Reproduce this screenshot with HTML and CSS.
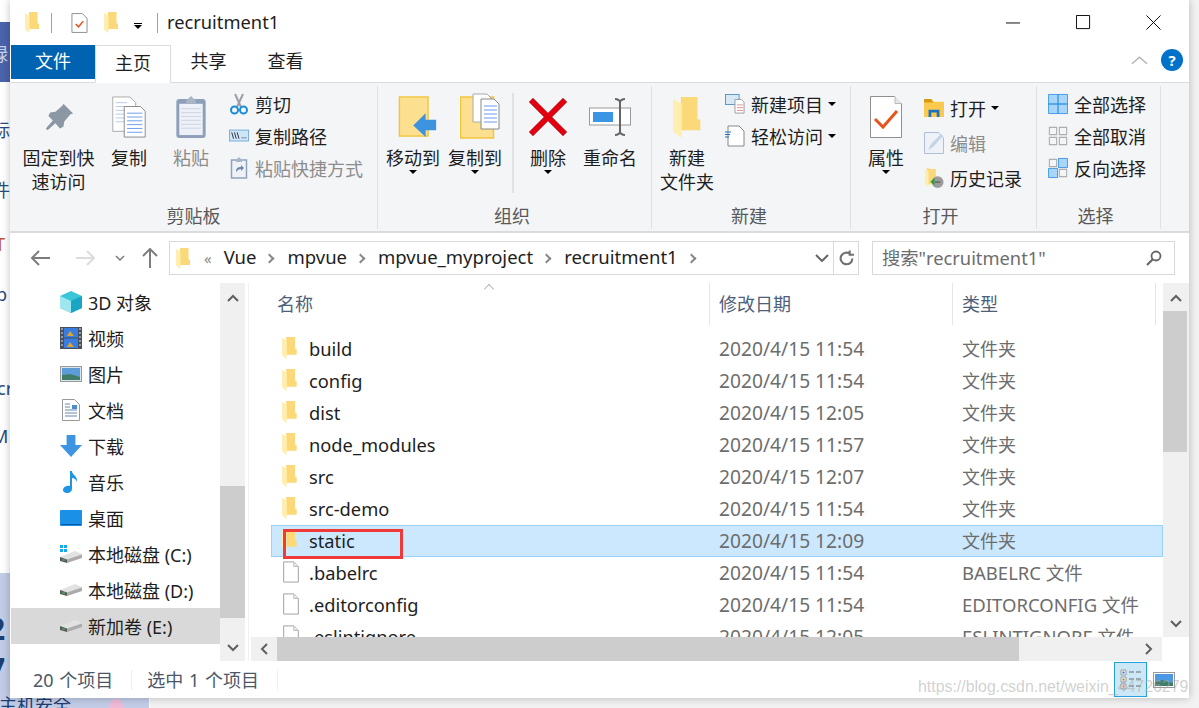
FILE: index.html
```html
<!DOCTYPE html>
<html lang="zh-CN">
<head>
    <meta charset="UTF-8">
    <title>recruitment1</title>
    <link rel="stylesheet" href="styles.css">
</head>
<body>
    <svg class="defs" width="0" height="0">
        <symbol id="folder" viewBox="0 0 14 21" preserveAspectRatio="xMinYMid">
            <path d="M4 0h8.500v11.500H14V17H4z" fill="#fbd878"/>
            <path d="M0 1l4.500 2.500V21L0 17.500z" fill="#ffeeb0"/>
        </symbol>
        <symbol id="file" viewBox="0 0 18 24">
            <path d="M1 1h11l5 5v17H1z" fill="#fff" stroke="#9a9a9a"/>
            <path d="M12 1v5h5" fill="#e8e8e8" stroke="#bcbcbc"/>
        </symbol>
        <symbol id="drive" viewBox="0 0 22 12">
            <path d="M0 6l15-6 7 3v3L7 11 0 8z" fill="#e2e2e2"/>
            <path d="M0 6l7 2.500V12L0 10z" fill="#5a5a5a"/>
            <path d="M7 8.500L22 3.500V7L7 12z" fill="#ababab"/>
            <path d="M2 8.500h3v1H2z" fill="#55c060"/>
        </symbol>
    </svg>

    <div class="wallpaper">
        <div class="wp-band"><span>禄</span></div>
        <div class="wp-text wp-t1">标</div>
        <div class="wp-text wp-t2">件</div>
        <div class="wp-text wp-t3">T</div>
        <div class="wp-text wp-t4">p</div>
        <div class="wp-text wp-t5">cr</div>
        <div class="wp-text wp-t6">M</div>
        <div class="wp-photo">
            <span class="wp-big wp-b1">2</span>
            <span class="wp-big wp-b2">7</span>
            <span class="wp-caption">主机安全</span>
            <i class="wp-flower"></i>
        </div>
    </div>

    <div class="window">
        <div class="titlebar">
            <svg class="ico folder-sm"><use href="#folder"/></svg>
            <span class="tb-sep"></span>
            <svg class="qa-check" viewBox="0 0 18 22"><path d="M1 1h11l5 5v15H1z" fill="#fff" stroke="#8c8c8c"/><path d="M5 12l3 3 5-6" fill="none" stroke="#e8531d" stroke-width="1.6"/></svg>
            <svg class="ico folder-sm qa-folder"><use href="#folder"/></svg>
            <span class="qa-drop"></span>
            <span class="tb-sep tb-sep2"></span>
            <span class="title">recruitment1</span>
            <div class="win-btns">
                <svg viewBox="0 0 16 16" class="win-btn"><path d="M0 8.500h15" stroke="#000" fill="none"/></svg>
                <svg viewBox="0 0 16 16" class="win-btn"><path d="M.5.500h14v14H.5z" stroke="#000" fill="none"/></svg>
                <svg viewBox="0 0 16 16" class="win-btn"><path d="M.5.500l15 15M15.500.500l-15 15" stroke="#000" fill="none"/></svg>
            </div>
        </div>

        <div class="tabs">
            <div class="tab tab-file">文件</div>
            <div class="tab tab-active">主页</div>
            <div class="tab">共享</div>
            <div class="tab">查看</div>
            <div class="tabs-right">
                <svg class="collapse" viewBox="0 0 18 10"><path d="M1 9l8-7 8 7" fill="none" stroke="#b4b4b4" stroke-width="1.6"/></svg>
                <span class="help">?</span>
            </div>
        </div>

        <div class="ribbon">
            <section class="group g-clip">
                <div class="group-body">
                    <div class="big big-pin">
                        <svg class="big-ico" viewBox="0 0 34 34"><path d="M22 2l11 11-3 1-7 8-1 6-4 2-5-6-9 8-2-2 8-9-5-5 2-4 6-1 8-7z" fill="#8b98a4"/></svg>
                        <span class="big-label">固定到快<br>速访问</span>
                    </div>
                    <div class="big big-copy">
                        <svg class="big-ico" viewBox="0 0 36 44"><path d="M1 1h18l6 6v30H1z" fill="#fff" stroke="#aaa"/><path d="M4 7h12M4 11h16M4 15h16M4 19h16M4 23h16M4 27h16" stroke="#b5c6e8"/><path d="M13 11h17l5 5v27H13z" fill="#fff" stroke="#888"/><path d="M16 18h16M16 22h16M16 26h16M16 30h16M16 34h16M16 38h16" stroke="#6a9bea"/></svg>
                        <span class="big-label">复制</span>
                    </div>
                    <div class="big big-paste dim">
                        <svg class="big-ico" viewBox="0 0 30 44"><rect x="0" y="4" width="30" height="40" rx="3" fill="#8e9fbc"/><rect x="3" y="9" width="24" height="32" fill="#edf0f6"/><path d="M5 14h20M5 18h20M5 22h20M5 26h20M5 30h20M5 34h20" stroke="#ccd5e4"/><path d="M10 6l5-5 5 5v3H10z" fill="#a9b4c4"/></svg>
                        <span class="big-label">粘贴</span>
                    </div>
                    <div class="small-col col-clip">
                        <div class="small">
                            <svg class="small-ico" viewBox="0 0 18 22"><path d="M5 1l6 13M13 1L7 14" stroke="#9aa0a6" stroke-width="2"/><circle cx="4.500" cy="17" r="3.500" fill="none" stroke="#1b8fd6" stroke-width="2"/><circle cx="13.500" cy="17" r="3.500" fill="none" stroke="#1b8fd6" stroke-width="2"/></svg>
                            <span>剪切</span>
                        </div>
                        <div class="small">
                            <svg class="small-ico" viewBox="0 0 22 14"><rect x=".5" y=".5" width="21" height="12" fill="#cfe6f8" stroke="#6ea9dc"/><path d="M3 3l2 7M6 3l2 7M9 3l2 7" stroke="#223" fill="none"/><path d="M14 9h1M16 9h1M18 9h1" stroke="#223"/></svg>
                            <span>复制路径</span>
                        </div>
                        <div class="small dim">
                            <svg class="small-ico" viewBox="0 0 16 22"><rect x=".5" y="3" width="15" height="18" fill="#eef2f7" stroke="#8ea3c0" stroke-width="1.500"/><path d="M5 3l3-3 3 3v2H5z" fill="#a9b4c4"/><path d="M5 15c0-4 2-5 5-5V8l3 3-3 3v-2c-2 0-3 1-5 3z" fill="#6f86a8"/></svg>
                            <span>粘贴快捷方式</span>
                        </div>
                    </div>
                </div>
                <div class="group-name">剪贴板</div>
            </section>

            <section class="group g-org">
                <div class="group-body">
                    <div class="big big-move">
                        <svg class="big-ico" viewBox="0 0 40 44"><rect x=".5" y="1" width="30" height="41" fill="#fde08f" stroke="#f0c63f" stroke-width="1.500"/><path d="M15 31L28 18v7h11v11H28v7z" fill="#3d94de"/></svg>
                        <span class="big-label">移动到</span><span class="drop"></span>
                    </div>
                    <div class="big big-copyto">
                        <svg class="big-ico" viewBox="0 0 40 46"><rect x=".5" y="4" width="33" height="41" fill="#fde08f" stroke="#f0c63f" stroke-width="1.500"/><path d="M13 1h14l4 4v24H13z" fill="#fff" stroke="#aaa"/><path d="M21 6h13l5 5v25H21z" fill="#fff" stroke="#888"/><path d="M24 13h13M24 17h13M24 21h13M24 25h13M24 29h13" stroke="#6a9bea"/></svg>
                        <span class="big-label">复制到</span><span class="drop"></span>
                    </div>
                    <div class="v-sep"></div>
                    <div class="big big-del">
                        <svg class="big-ico" viewBox="0 0 38 38"><path d="M4 0l15 15L34 0l4 4-15 15 15 15-4 4-15-15L4 38l-4-4 15-15L0 4z" fill="#e0000f" stroke="#a4424a" stroke-width=".5"/></svg>
                        <span class="big-label">删除</span><span class="drop"></span>
                    </div>
                    <div class="big big-ren">
                        <svg class="big-ico" viewBox="0 0 42 38"><rect x=".5" y="10" width="41" height="17" fill="#fff" stroke="#999"/><rect x="4" y="14" width="20" height="10" fill="#3a96e4"/><path d="M26 1c3 0 5 2 5 3v30c0 1 2 3 5 3M36 1c-3 0-5 2-5 3M26 37c3 0 5-2 5-3" fill="none" stroke="#666" stroke-width="2"/></svg>
                        <span class="big-label">重命名</span>
                    </div>
                </div>
                <div class="group-name">组织</div>
            </section>

            <section class="group g-new">
                <div class="group-body">
                    <div class="big big-newf">
                        <svg class="big-ico" viewBox="0 0 28 41"><use href="#folder"/></svg>
                        <span class="big-label">新建<br>文件夹</span>
                    </div>
                    <div class="small-col col-new">
                        <div class="small">
                            <svg class="small-ico" viewBox="0 0 22 22"><rect x=".5" y=".5" width="15" height="11" fill="#d7e8f6" stroke="#4d8fc0"/><path d="M11 6h7l3 3v12H11z" fill="#fff" stroke="#999"/><path d="M13 12h7M13 15h7M13 18h7" stroke="#d98a8a"/></svg>
                            <span>新建项目</span><span class="drop-in"></span>
                        </div>
                        <div class="small">
                            <svg class="small-ico" viewBox="0 0 20 22"><path d="M3 1h11l5 5v15H3z" fill="#fff" stroke="#888"/><path d="M0 7h6M0 9.500h5M0 12h4" stroke="#1b70c0"/></svg>
                            <span>轻松访问</span><span class="drop-in"></span>
                        </div>
                    </div>
                </div>
                <div class="group-name">新建</div>
            </section>

            <section class="group g-open">
                <div class="group-body">
                    <div class="big big-prop">
                        <svg class="big-ico" viewBox="0 0 32 42"><path d="M.5.500h24l7 7v34H.5z" fill="#fff" stroke="#8f8f8f"/><path d="M25 .5v7h7" fill="#e6e6e6" stroke="#bbb"/><path d="M5 23l8 8L27 15" fill="none" stroke="#e8531d" stroke-width="3"/></svg>
                        <span class="big-label">属性</span><span class="drop"></span>
                    </div>
                    <div class="small-col col-open">
                        <div class="small">
                            <svg class="small-ico" viewBox="0 0 22 20"><path d="M0 0h8l3 3h11v17H0z" fill="#fcc94f"/><path d="M0 0h8l2 4H0z" fill="#d79b11"/><path d="M5 20v-8h12v8h-3v-5H8v5z" fill="#1c73c5"/></svg>
                            <span>打开</span><span class="drop-in"></span>
                        </div>
                        <div class="small dim">
                            <svg class="small-ico" viewBox="0 0 20 22"><path d="M.5.500h14l5 5v16H.5z" fill="#eef2f8" stroke="#aebfd8"/><path d="M4 18l3-6 10-10 2 2L9 15z" fill="#c5d2e4"/></svg>
                            <span>编辑</span>
                        </div>
                        <div class="small">
                            <svg class="small-ico" viewBox="0 0 22 22"><path d="M3 0l5 1h5v17H3z" fill="#fbd878"/><path d="M1 1l4 2.500V21l-4-3z" fill="#ffeeb0"/><circle cx="15" cy="15.500" r="6.500" fill="#9c9c9c"/><path d="M7 15l4.500-4v8z" fill="#26a13a"/><path d="M12 15.500h6" stroke="#444"/></svg>
                            <span>历史记录</span>
                        </div>
                    </div>
                </div>
                <div class="group-name">打开</div>
            </section>

            <section class="group g-sel">
                <div class="group-body">
                    <div class="small-col col-sel">
                        <div class="small">
                            <svg class="small-ico" viewBox="0 0 22 22"><path d="M.500.500h21v21H.5z" fill="#a8d6fb" stroke="#3a96e4"/><path d="M11 0v22M0 11h22" stroke="#3a96e4" stroke-width="1.500"/></svg>
                            <span>全部选择</span>
                        </div>
                        <div class="small">
                            <svg class="small-ico" viewBox="0 0 22 22"><path d="M1.500 1.500h8v8h-8zM12.500 1.500h8v8h-8zM1.500 12.500h8v8h-8zM12.500 12.500h8v8h-8z" fill="none" stroke="#aeaeae" stroke-width="1.200"/></svg>
                            <span>全部取消</span>
                        </div>
                        <div class="small">
                            <svg class="small-ico" viewBox="0 0 22 22"><path d="M.5 11.500h10v10H.5zM11.500.500h10v10h-10z" fill="#a8d6fb" stroke="#3a96e4"/><path d="M1.500 1.500h8v8h-8zM12.500 12.500h8v8h-8z" fill="none" stroke="#aeaeae" stroke-width="1.200"/></svg>
                            <span>反向选择</span>
                        </div>
                    </div>
                </div>
                <div class="group-name">选择</div>
            </section>
        </div>

        <div class="navbar">
            <svg class="nav-arrow" viewBox="0 0 20 16"><path d="M9 1L2 8l7 7M2 8h18" fill="none" stroke="#7d7d7d" stroke-width="2"/></svg>
            <svg class="nav-arrow nav-fwd" viewBox="0 0 20 16"><path d="M11 1l7 7-7 7M18 8H0" fill="none" stroke="#dcdcdc" stroke-width="2"/></svg>
            <svg class="nav-down" viewBox="0 0 10 6"><path d="M1 1l4 4 4-4" fill="none" stroke="#7d7d7d" stroke-width="1.500"/></svg>
            <svg class="nav-up" viewBox="0 0 16 20"><path d="M1 8l7-7 7 7M8 1v19" fill="none" stroke="#7d7d7d" stroke-width="2"/></svg>
            <div class="address">
                <svg class="ico folder-sm addr-folder"><use href="#folder"/></svg>
                <span class="crumb-more">«</span>
                <span class="crumb">Vue</span><span class="chev"></span>
                <span class="crumb">mpvue</span><span class="chev"></span>
                <span class="crumb">mpvue_myproject</span><span class="chev"></span>
                <span class="crumb">recruitment1</span><span class="chev"></span>
                <svg class="addr-down" viewBox="0 0 14 8"><path d="M1 1l6 6 6-6" fill="none" stroke="#666" stroke-width="2"/></svg>
                <div class="addr-btn">
                    <svg class="addr-refresh" viewBox="0 0 16 16"><path d="M13.500 8a5.500 5.500 0 1 1-2-4.300M11 .5v4h4" fill="none" stroke="#707070" stroke-width="2"/></svg>
                </div>
            </div>
            <div class="search">
                <span>搜索"recruitment1"</span>
                <svg class="search-ico" viewBox="0 0 16 16"><circle cx="10" cy="6" r="4.500" fill="none" stroke="#666" stroke-width="1.800"/><path d="M7 9l-6 6" stroke="#666" stroke-width="2.200"/></svg>
            </div>
        </div>

        <div class="main">
            <div class="tree">
                <div class="tree-rows">
                    <div class="tree-row">
                        <svg class="tree-ico" viewBox="0 0 22 22"><path d="M11 0l11 5v12l-11 5L0 17V5z" fill="#39c6d9"/><path d="M0 5l11 5v12L0 17z" fill="#9fe7ee"/><path d="M22 5l-11 5v12l11-5z" fill="#1ba5c4"/></svg>
                        <span>3D 对象</span>
                    </div>
                    <div class="tree-row">
                        <svg class="tree-ico" viewBox="0 0 22 22"><rect width="22" height="22" fill="#474f59"/><rect x="4" y="1" width="14" height="9.500" fill="#3a7de0"/><rect x="4" y="11.500" width="14" height="9.500" fill="#3a7de0"/><path d="M7 9l3-5 4 5zM7 20l3-5 4 5z" fill="#e2a329"/><path d="M1 2h2M1 6h2M1 10h2M1 14h2M1 18h2M19 2h2M19 6h2M19 10h2M19 14h2M19 18h2" stroke="#e9e9e9"/></svg>
                        <span>视频</span>
                    </div>
                    <div class="tree-row">
                        <svg class="tree-ico" viewBox="0 0 22 16"><rect x=".5" y=".5" width="21" height="15" fill="#d8e6f0" stroke="#999"/><rect x="2" y="2" width="18" height="12" fill="#5d9cd8"/><path d="M2 9l8-1 10 3v3H2z" fill="#3f7d69"/></svg>
                        <span>图片</span>
                    </div>
                    <div class="tree-row">
                        <svg class="tree-ico" viewBox="0 0 18 22"><path d="M.5.500h12l5 5v16H.5z" fill="#fff" stroke="#999"/><path d="M3 5h5M3 8h5M3 11h12M3 14h12M3 17h12" stroke="#6b86b2"/><rect x="10" y="6" width="5" height="4" fill="#4c8cd3"/></svg>
                        <span>文档</span>
                    </div>
                    <div class="tree-row">
                        <svg class="tree-ico" viewBox="0 0 20 20"><path d="M6 0h8v9h6L10 20 0 9h6z" fill="#3c94e2"/></svg>
                        <span>下载</span>
                    </div>
                    <div class="tree-row">
                        <svg class="tree-ico" viewBox="0 0 16 22"><path d="M7 0h2c0 4 6 5 5 11-1-3-3-4-5-4v11c0 2-2 4-5 4s-4-2-4-3c0-3 4-5 7-4z" fill="#1e96e2"/></svg>
                        <span>音乐</span>
                    </div>
                    <div class="tree-row">
                        <svg class="tree-ico" viewBox="0 0 22 16"><rect width="22" height="16" rx="1" fill="#1a90e6"/><path d="M1 14h20v1H1z" fill="#0a5aa8"/></svg>
                        <span>桌面</span>
                    </div>
                    <div class="tree-row">
                        <svg class="tree-ico" viewBox="0 0 22 18"><use href="#drive" y="6" width="22" height="12"/><path d="M0 0h3v3H0zM4 0h3v3H4zM0 4h3v3H0zM4 4h3v3H4z" fill="#17a9ee"/></svg>
                        <span>本地磁盘 (C:)</span>
                    </div>
                    <div class="tree-row">
                        <svg class="tree-ico" viewBox="0 0 22 12"><use href="#drive"/></svg>
                        <span>本地磁盘 (D:)</span>
                    </div>
                    <div class="tree-row tree-sel">
                        <svg class="tree-ico" viewBox="0 0 22 12"><use href="#drive"/></svg>
                        <span>新加卷 (E:)</span>
                    </div>
                </div>
                <div class="vscroll tree-scroll">
                    <svg class="sb-arrow" viewBox="0 0 12 8"><path d="M1 7l5-5 5 5" fill="none" stroke="#606060" stroke-width="2"/></svg>
                    <div class="sb-track"><div class="sb-thumb"></div></div>
                    <svg class="sb-arrow" viewBox="0 0 12 8"><path d="M1 1l5 5 5-5" fill="none" stroke="#606060" stroke-width="2"/></svg>
                </div>
            </div>

            <div class="files">
                <div class="files-inner">
                    <div class="list">
                        <div class="cols-head">
                            <span class="sort-mark"></span>
                            <div class="hcol c-name">名称</div>
                            <div class="hcol c-date">修改日期</div>
                            <div class="hcol c-type">类型</div>
                        </div>
                        <div class="rows">
                            <div class="row"><svg class="row-ico"><use href="#folder"/></svg><span class="c-name">build</span><span class="c-date">2020/4/15 11:54</span><span class="c-type">文件夹</span></div>
                            <div class="row"><svg class="row-ico"><use href="#folder"/></svg><span class="c-name">config</span><span class="c-date">2020/4/15 11:54</span><span class="c-type">文件夹</span></div>
                            <div class="row"><svg class="row-ico"><use href="#folder"/></svg><span class="c-name">dist</span><span class="c-date">2020/4/15 12:05</span><span class="c-type">文件夹</span></div>
                            <div class="row"><svg class="row-ico"><use href="#folder"/></svg><span class="c-name">node_modules</span><span class="c-date">2020/4/15 11:57</span><span class="c-type">文件夹</span></div>
                            <div class="row"><svg class="row-ico"><use href="#folder"/></svg><span class="c-name">src</span><span class="c-date">2020/4/15 12:07</span><span class="c-type">文件夹</span></div>
                            <div class="row"><svg class="row-ico"><use href="#folder"/></svg><span class="c-name">src-demo</span><span class="c-date">2020/4/15 11:54</span><span class="c-type">文件夹</span></div>
                            <div class="row row-sel"><svg class="row-ico"><use href="#folder"/></svg><span class="c-name">static</span><span class="c-date">2020/4/15 12:09</span><span class="c-type">文件夹</span><i class="red-box"></i></div>
                            <div class="row"><svg class="row-ico"><use href="#file"/></svg><span class="c-name">.babelrc</span><span class="c-date">2020/4/15 11:54</span><span class="c-type type-ext">BABELRC 文件</span></div>
                            <div class="row"><svg class="row-ico"><use href="#file"/></svg><span class="c-name">.editorconfig</span><span class="c-date">2020/4/15 11:54</span><span class="c-type type-ext">EDITORCONFIG 文件</span></div>
                            <div class="row"><svg class="row-ico"><use href="#file"/></svg><span class="c-name">.eslintignore</span><span class="c-date">2020/4/15 12:05</span><span class="c-type type-ext">ESLINTIGNORE 文件</span></div>
                        </div>
                    </div>
                    <div class="vscroll list-scroll">
                        <svg class="sb-arrow" viewBox="0 0 12 8"><path d="M1 7l5-5 5 5" fill="none" stroke="#606060" stroke-width="2"/></svg>
                        <div class="sb-track"><div class="sb-thumb"></div></div>
                        <svg class="sb-arrow" viewBox="0 0 12 8"><path d="M1 1l5 5 5-5" fill="none" stroke="#606060" stroke-width="2"/></svg>
                    </div>
                </div>
                <div class="hscroll">
                    <svg class="sb-arrow-h" viewBox="0 0 8 12"><path d="M7 1L2 6l5 5" fill="none" stroke="#606060" stroke-width="2"/></svg>
                    <div class="hs-track"><div class="hs-thumb"></div></div>
                    <svg class="sb-arrow-h" viewBox="0 0 8 12"><path d="M1 1l5 5-5 5" fill="none" stroke="#606060" stroke-width="2"/></svg>
                </div>
            </div>
        </div>

        <div class="status">
            <span class="st-count">20 个项目</span>
            <span class="st-sep"></span>
            <span class="st-sel">选中 1 个项目</span>
            <span class="st-sep"></span>
            <div class="views">
                <div class="view view-on">
                    <svg viewBox="0 0 22 22" class="view-ico"><path d="M1 1h5v5H1zM1 8h5v5H1zM1 15h5v5H1z" fill="#fff" stroke="#999"/><path d="M2.500 2.500h2v2h-2z" fill="#2b6fc4"/><path d="M2.500 9.500h2v2h-2z" fill="#8f8f2b"/><path d="M2.500 16.500h2v2h-2z" fill="#d05b3b"/><path d="M9 3h5M16 3h5M9 10h5M16 10h5M9 17h5M16 17h5" stroke="#666"/></svg>
                </div>
                <div class="view">
                    <svg viewBox="0 0 22 16" class="view-ico"><rect x=".5" y=".5" width="21" height="15" fill="#fff" stroke="#999"/><rect x="2" y="2" width="18" height="12" fill="#4c98e2"/><path d="M2 10l8-2 10 3v3H2z" fill="#3f7d69"/></svg>
                </div>
            </div>
        </div>
    </div>

    <div class="watermark">https://blog.csdn.net/weixin_44726279</div>
</body>
</html>
```

FILE: styles.css
```css
* {
    box-sizing: border-box;
}
html, body {
    margin: 0;
    height: 100%;
    overflow: hidden;
}
body {
    position: relative;
    width: 1199px;
    height: 708px;
    background-color: #f2f2f2;
    font-family: "Noto Sans", "Noto Sans CJK SC", sans-serif;
    font-size: 18px;
    color: #1e1e1e;
}
.defs {
    position: absolute;
}

/* desktop behind the window */
.wallpaper {
    position: absolute;
    left: 0;
    top: 0;
    width: 150px;
    height: 708px;
    background-color: #fff;
}
.wp-band {
    position: absolute;
    left: 0;
    top: 22px;
    width: 10px;
    height: 60px;
    background-color: #4a64ac;
    overflow: hidden;
    color: #c8d4ee;
    line-height: 24px;
}
.wp-band span {
    position: absolute;
    left: -10px;
    top: 20px;
}
.wp-text {
    position: absolute;
    left: -8px;
    color: #2a4a7a;
    line-height: 24px;
}
.wp-t1 { top: 118px; }
.wp-t2 { top: 178px; }
.wp-t3 { top: 232px; left: -5px; color: #c0553a; }
.wp-t4 { top: 282px; left: -4px; }
.wp-t5 { top: 376px; left: -3px; }
.wp-t6 { top: 424px; left: -8px; }
.wp-photo {
    position: absolute;
    left: 0;
    top: 573px;
    width: 149px;
    height: 135px;
    background-color: #c2cce6;
    overflow: hidden;
}
.wp-big {
    position: absolute;
    left: -12px;
    color: #1d3d73;
    font-size: 30px;
    font-weight: 700;
    line-height: 36px;
}
.wp-b1 { top: 38px; }
.wp-b2 { top: 78px; }
.wp-caption {
    position: absolute;
    left: -1px;
    top: 120px;
    color: #1d3d73;
    font-size: 18px;
    line-height: 24px;
}
.wp-flower {
    position: absolute;
    left: 109px;
    top: 126px;
    width: 14px;
    height: 14px;
    border-radius: 50%;
    background-color: #eebad6;
}

/* window */
.window {
    position: absolute;
    left: 10px;
    top: 0;
    width: 1179px;
    height: 698px;
    background-color: #fff;
    box-shadow: 0 0 8px rgba(0, 0, 0, 0.25);
    display: flex;
    flex-direction: column;
}

.titlebar {
    height: 45px;
    display: flex;
    align-items: center;
    padding-left: 15px;
    flex: none;
}
.folder-sm {
    width: 14px;
    height: 21px;
    display: block;
    flex: none;
}
.tb-sep {
    width: 1px;
    height: 20px;
    background-color: #a0a0a0;
    margin-left: 12px;
}
.tb-sep2 {
    margin-left: 15px;
}
.qa-check {
    width: 17px;
    height: 22px;
    margin-left: 19px;
}
.qa-folder {
    margin-left: 16px;
}
.qa-drop {
    width: 8px;
    height: 6px;
    margin-left: 16px;
    margin-top: 6px;
    border-top: 1px solid #000;
}
.qa-drop::after {
    content: "";
    display: block;
    margin-top: 1px;
    border-left: 4px solid transparent;
    border-right: 4px solid transparent;
    border-top: 4px solid #000;
}
.title {
    margin-left: 9px;
    font-size: 18.3px;
    line-height: 43px;
    height: 45px;
}
.win-btns {
    margin-left: auto;
    margin-right: 28px;
    display: flex;
    gap: 55px;
}
.win-btn {
    width: 15px;
    height: 15px;
}

.tabs {
    height: 38px;
    display: flex;
    flex: none;
    border-bottom: 1px solid #dadbdc;
    padding-left: 1px;
}
.tab {
    width: 77px;
    line-height: 33px;
    text-align: center;
    font-size: 18px;
}
.tab-file {
    width: 84px;
    height: 34px;
    background-color: #0063b1;
    color: #fff;
}
.tab-active {
    height: 38px;
    margin-right: -1px;
    width: 76px;
    border: 1px solid #dadbdc;
    border-bottom: 1px solid #fff;
    background-color: #fff;
    line-height: 34px;
}
.tabs-right {
    margin-left: auto;
    margin-right: 6px;
    display: flex;
    align-items: center;
    gap: 13px;
    margin-top: -7px;
}
.collapse {
    width: 17px;
    height: 10px;
}
.help {
    width: 22px;
    height: 22px;
    border-radius: 50%;
    background-color: #0072c9;
    color: #fff;
    font-size: 15px;
    font-weight: 700;
    line-height: 22px;
    text-align: center;
}

/* ribbon */
.ribbon {
    height: 150px;
    flex: none;
    display: flex;
    background-color: #f4f5f7;
    border-bottom: 2px solid #dadbdc;
    padding-top: 3px;
}
.group {
    border-right: 1px solid #dfe1e3;
    height: 143px;
    display: flex;
    flex-direction: column;
    flex: none;
}
.g-clip { width: 368px; }
.g-org { width: 274px; }
.g-new { width: 199px; }
.g-open { width: 186px; }
.g-sel { width: 124px; }
.group-body {
    flex: 1;
    display: flex;
    min-height: 0;
}
.group-name {
    text-align: center;
    height: 30px;
    line-height: 34px;
    font-size: 18px;
    color: #595959;
}
.g-org .group-name { padding-right: 5px; }
.g-new .group-name { padding-right: 4px; }
.g-open .group-name { padding-right: 6px; }
.g-sel .group-name { padding-right: 6px; }
.big {
    display: flex;
    flex-direction: column;
    align-items: center;
    font-size: 18px;
    line-height: 24px;
    flex: none;
}
.big-label {
    text-align: center;
    white-space: nowrap;
}
.big-ico {
    display: block;
}
.dim {
    color: #8c8c8c;
}
.big-pin {
    width: 97px;
    padding-top: 16px;
}
.big-pin .big-ico { width: 32px; height: 30px; margin-bottom: 14px; }
.big-copy {
    width: 42px;
    margin-left: 1px;
    padding-top: 10px;
}
.big-copy .big-ico { width: 36px; height: 42px; margin-bottom: 8px; }
.big-paste {
    width: 50px;
    margin-left: 16px;
    padding-top: 9px;
}
.big-paste .big-ico { width: 30px; height: 43px; margin-bottom: 8px; }
.small-col {
    display: flex;
    flex-direction: column;
    padding-top: 2px;
}
.col-clip { margin-left: 13px; }
.small {
    display: flex;
    align-items: center;
    height: 32px;
    font-size: 18px;
    white-space: nowrap;
    gap: 6px;
}
.small-ico {
    width: 20px;
    height: 22px;
    flex: none;
}
.big-move {
    width: 62px;
    margin-left: 4px;
    padding-top: 10px;
}
.big-move .big-ico { width: 40px; height: 42px; margin-bottom: 8px; margin-left: 9px; }
.big-copyto {
    width: 62px;
    padding-top: 7px;
}
.big-copyto .big-ico { width: 40px; height: 46px; margin-bottom: 7px; margin-left: 10px; }
.drop {
    width: 0;
    height: 0;
    border-left: 4px solid transparent;
    border-right: 4px solid transparent;
    border-top: 4px solid #000;
}
.v-sep {
    width: 2px;
    height: 100px;
    background-color: #e0e1e3;
    margin: 7px 9px 0 6px;
}
.big-del {
    width: 50px;
    margin-right: 7px;
    padding-top: 12px;
}
.big-del .big-ico { width: 38px; height: 38px; margin-bottom: 10px; }
.big-ren {
    width: 60px;
    padding-top: 12px;
}
.big-ren .big-ico { width: 42px; height: 38px; margin-bottom: 10px; }
.big-newf {
    width: 70px;
    padding-top: 11px;
}
.big-newf .big-ico { width: 28px; height: 41px; margin-bottom: 8px; }
.col-new { margin-left: 3px; }
.drop-in {
    width: 0;
    height: 0;
    margin-left: -1px;
    border-left: 4px solid transparent;
    border-right: 4px solid transparent;
    border-top: 4px solid #000;
}
.big-prop {
    width: 70px;
    padding-top: 10px;
}
.big-prop .big-ico { width: 32px; height: 42px; margin-bottom: 8px; }
.col-open {
    margin-left: 3px;
    padding-top: 4px;
}
.col-open .small { height: 35px; }
.col-sel { margin-left: 11px; }

/* address bar */
.navbar {
    height: 50px;
    flex: none;
    display: flex;
    align-items: center;
}
.nav-arrow {
    width: 20px;
    height: 16px;
    margin-left: 20px;
}
.nav-fwd {
    margin-left: 26px;
}
.nav-down {
    width: 10px;
    height: 6px;
    margin-left: 19px;
}
.nav-up {
    width: 16px;
    height: 20px;
    margin-left: 17px;
}
.address {
    margin-left: 11px;
    width: 690px;
    height: 34px;
    border: 1px solid #d9d9d9;
    display: flex;
    align-items: center;
    padding-left: 6px;
}
.crumb-more {
    color: #888;
    margin-left: 14px;
    margin-right: 12px;
    font-size: 15px;
}
.crumb {
    font-size: 18.5px;
    color: #1e1e1e;
    margin-top: -3px;
}
.chev {
    width: 7px;
    height: 7px;
    border-top: 2px solid #888;
    border-right: 2px solid #888;
    transform: rotate(45deg);
    margin: 0 14px 0 10px;
}
.addr-down {
    width: 14px;
    height: 8px;
    margin-left: auto;
    margin-right: 4px;
}
.addr-btn {
    width: 25px;
    height: 100%;
    border-left: 1px solid #d9d9d9;
    display: flex;
    align-items: center;
    justify-content: center;
}
.addr-refresh {
    width: 17px;
    height: 17px;
}
.search {
    margin-left: 13px;
    width: 303px;
    height: 34px;
    border: 1px solid #d9d9d9;
    display: flex;
    align-items: center;
    padding: 0 12px 0 9px;
    color: #6d6d6d;
    font-size: 18.3px;
}
.search span {
    margin-top: -3px;
}
.search-ico {
    width: 16px;
    height: 16px;
    margin-left: auto;
}

/* tree + list */
.main {
    flex: none;
    height: 378px;
    display: flex;
    background-color: #fff;
}
.tree {
    width: 235px;
    display: flex;
    flex: none;
}
.tree-rows {
    width: 209px;
    padding-top: 1px;
    margin-left: 1px;
}
.tree-row {
    height: 36px;
    display: flex;
    align-items: center;
    padding-left: 49px;
    gap: 6px;
    font-size: 18px;
    white-space: nowrap;
}
.tree-ico {
    width: 22px;
    height: 22px;
    flex: none;
}
.tree-sel {
    background-color: #d9d9d9;
}
.vscroll {
    width: 25px;
    background-color: #f0f0f0;
    display: flex;
    flex-direction: column;
    align-items: center;
    flex: none;
}
.sb-arrow {
    width: 12px;
    height: 8px;
    margin: 11px 0 9px;
    flex: none;
}
.sb-track {
    flex: 1;
    width: 100%;
}
.sb-thumb {
    background-color: #cdcdcd;
    width: 100%;
}
.tree-scroll .sb-track {
    padding-top: 175px;
}
.tree-scroll .sb-thumb {
    height: 132px;
}
.list-scroll {
    width: 26px;
}
.list-scroll .sb-thumb {
    width: 24px;
    height: 141px;
}
.files {
    flex: 1;
    min-width: 0;
    display: flex;
    flex-direction: column;
    margin-left: 3px;
    border-left: 1px solid #f0f0f0;
    overflow: hidden;
}
.files-inner {
    flex: 1;
    min-height: 0;
    display: flex;
}
.list {
    flex: 1;
    min-width: 0;
    overflow: hidden;
}
.cols-head {
    height: 42px;
    position: relative;
    display: flex;
    color: #4c607a;
    font-size: 18px;
    line-height: 42px;
}
.hcol {
    border-right: 1px solid #e5e5e5;
}
.sort-mark {
    position: absolute;
    left: 235px;
    top: 1px;
    width: 10px;
    height: 10px;
    border-top: 1px solid #999;
    border-left: 1px solid #999;
    transform: rotate(45deg) scale(.7);
}
.c-name {
    width: 461px;
    padding-left: 28px;
    flex: none;
}
.c-date {
    width: 243px;
    padding-left: 9px;
    flex: none;
}
.c-type {
    width: 203px;
    padding-left: 9px;
    flex: none;
    white-space: nowrap;
}
.rows {
    padding-top: 8px;
}
.row {
    height: 32px;
    display: flex;
    align-items: center;
    position: relative;
    margin-left: 22px;
    padding-bottom: 2px;
    font-size: 18px;
    white-space: nowrap;
    color: #6d6d6d;
}
.row .c-name {
    color: #1e1e1e;
    width: 410px;
    padding-left: 9px;
    font-size: 18.3px;
}
.row .c-date {
    font-size: 19.2px;
}
.row .type-ext {
    font-size: 18.5px;
}
.row-ico {
    width: 18px;
    height: 22px;
    margin-left: 11px;
    flex: none;
}
.row-sel {
    background-color: #cce8ff;
    box-shadow: inset 0 0 0 1px #99d1ff;
}
.red-box {
    position: absolute;
    left: 12px;
    top: 4px;
    width: 120px;
    height: 30px;
    border: 3px solid #f03a3a;
}
.hscroll {
    height: 24px;
    flex: none;
    display: flex;
    align-items: center;
    width: 911px;
    margin-left: 2px;
    background-color: #f0f0f0;
    overflow: hidden;
}
.sb-arrow-h {
    width: 8px;
    height: 12px;
    margin: 0 9px;
    flex: none;
}
.hs-track {
    flex: 1;
    height: 100%;
}
.hs-thumb {
    width: 742px;
    height: 100%;
    background-color: #cdcdcd;
}

.status {
    flex: 1;
    min-height: 0;
    display: flex;
    align-items: center;
    padding-left: 23px;
    color: #4b5766;
    font-size: 18px;
    word-spacing: 1px;
    background-color: #fff;
}
.st-count, .st-sel {
    margin-top: -2px;
}
.st-sep {
    width: 1px;
    height: 20px;
    background-color: #eee;
    margin-left: 18px;
}
.st-sel {
    margin-left: 15px;
}
.views {
    margin-left: auto;
    margin-right: 9px;
    display: flex;
    align-items: center;
    height: 100%;
}
.view {
    width: 33px;
    height: 35px;
    display: flex;
    align-items: center;
    justify-content: center;
}
.view-on {
    background-color: #cce8f6;
    border: 1px solid #26a0da;
}
.view-ico {
    width: 22px;
    height: 22px;
}
.watermark {
    position: absolute;
    left: 918px;
    top: 678px;
    font-family: "Liberation Sans", sans-serif;
    font-size: 15.9px;
    color: rgba(170, 170, 170, 0.55);
    white-space: nowrap;
}
```
